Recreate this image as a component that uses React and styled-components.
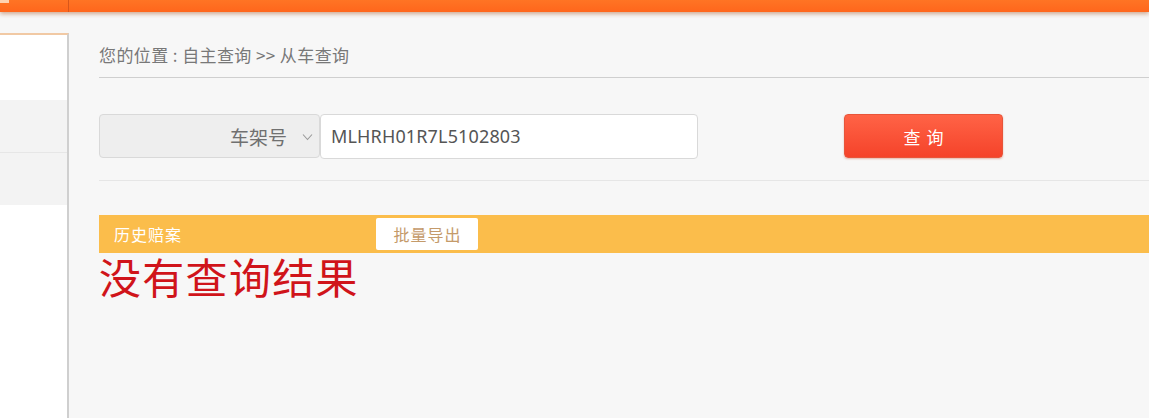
import React from "react";
import styled, { createGlobalStyle } from "styled-components";

const Global = createGlobalStyle`
  html, body { margin: 0; padding: 0; }
  body {
    width: 1149px;
    height: 418px;
    overflow: hidden;
    background: #f7f7f7;
    font-family: "Noto Sans CJK SC", "Noto Sans", "Liberation Sans", sans-serif;
  }
`;

const Page = styled.div`
  display: flex;
  flex-direction: column;
  height: 418px;
`;

const TopBar = styled.header`
  height: 12px;
  flex: none;
  display: flex;
  background: linear-gradient(#ff7424, #ff661c);
  box-shadow: 0 2px 4px rgba(160, 70, 20, 0.45);
  position: relative;
  z-index: 2;
`;

const BrandCell = styled.div`
  width: 68px;
  border-right: 1px solid #d8561a;
  position: relative;
  &::before {
    content: "";
    position: absolute;
    left: 0;
    top: 0;
    width: 9px;
    height: 3px;
    background: #ffd2b0;
  }
`;

const Body = styled.div`
  flex: 1;
  display: flex;
  min-height: 0;
`;

const Sidebar = styled.aside`
  width: 67px;
  flex: none;
  margin-top: 21px;
  background: #fff;
  border-top: 2px solid #f1c9a4;
  border-right: 2px solid #cfcfcf;
  display: flex;
  flex-direction: column;
`;

const SideItem = styled.div`
  height: ${(p) => p.$h}px;
  flex: none;
  background: ${(p) => (p.$shade ? "#f3f3f3" : "#fff")};
  border-bottom: ${(p) => (p.$line ? "1px solid #e6e6e6" : "none")};
`;

const Main = styled.main`
  flex: 1;
  min-width: 0;
  padding: 32px 0 0 30px;
  overflow: hidden;
  background: #f7f7f7;
`;

const Crumb = styled.div`
  font-size: 17px;
  color: #787878;
  line-height: 22px;
  padding-bottom: 11px;
  border-bottom: 1px solid #cfcfcf;
  letter-spacing: 0.4px;
`;

const SearchRow = styled.div`
  display: flex;
  align-items: center;
  height: 46px;
  margin-top: 35px;
  padding-bottom: 21px;
  border-bottom: 1px solid #e6e6e6;
`;

const SelectBox = styled.div`
  width: 221px;
  height: 44px;
  box-sizing: border-box;
  border: 1px solid #d9d9d9;
  border-radius: 4px;
  background: #eeeeee;
  display: flex;
  align-items: center;
  justify-content: flex-end;
  padding-right: 6px;
  gap: 15px;
  font-size: 19px;
  color: #707070;
`;

const Chevron = styled.svg`
  width: 11px;
  height: 8px;
  margin-top: 2px;
`;

const TextInput = styled.div`
  width: 378px;
  height: 45px;
  box-sizing: border-box;
  border: 1px solid #d9d9d9;
  border-radius: 4px;
  background: #fff;
  display: flex;
  align-items: center;
  padding-left: 10px;
  font-family: "Noto Sans", "Liberation Sans", sans-serif;
  font-size: 18px;
  letter-spacing: 0.15px;
  color: #555;
`;

const QueryButton = styled.button`
  margin-left: 146px;
  width: 159px;
  height: 44px;
  border: 1px solid #e8553a;
  border-radius: 4px;
  background: linear-gradient(#ff6346, #f5432a);
  color: #fff;
  font-family: inherit;
  font-size: 17px;
  letter-spacing: 6px;
  padding: 0 0 0 6px;
  box-shadow: 0 1px 2px rgba(200, 60, 30, 0.35);
`;

const ResultBar = styled.div`
  margin-top: 34px;
  height: 38px;
  background: #fbbd4b;
  display: flex;
  align-items: center;
`;

const BarTitle = styled.span`
  width: 262px;
  padding-left: 15px;
  font-size: 16px;
  letter-spacing: 1px;
  color: #fff;
`;

const ExportButton = styled.button`
  width: 102px;
  height: 32px;
  border: none;
  border-radius: 2px;
  background: #fff;
  color: #c49a6a;
  font-family: inherit;
  font-size: 16px;
  letter-spacing: 1px;
  padding: 0 0 0 1px;
`;

const Empty = styled.div`
  margin-top: -2px;
  font-size: 42px;
  line-height: 50px;
  color: #d0141a;
  letter-spacing: 1.3px;
`;

export default function App() {
  return (
    <>
      <Global />
      <Page>
        <TopBar>
          <BrandCell />
        </TopBar>
        <Body>
          <Sidebar>
            <SideItem $h={65} />
            <SideItem $h={52} $shade $line />
            <SideItem $h={52} $shade />
          </Sidebar>
          <Main>
            <Crumb>您的位置 : 自主查询 &gt;&gt; 从车查询</Crumb>
            <SearchRow>
              <SelectBox>
                <span>车架号</span>
                <Chevron viewBox="0 0 11 8">
                  <path d="M1 1.5 L5.5 6.5 L10 1.5" fill="none" stroke="#999" strokeWidth="1.1" />
                </Chevron>
              </SelectBox>
              <TextInput>MLHRH01R7L5102803</TextInput>
              <QueryButton>查询</QueryButton>
            </SearchRow>
            <ResultBar>
              <BarTitle>历史赔案</BarTitle>
              <ExportButton>批量导出</ExportButton>
            </ResultBar>
            <Empty>没有查询结果</Empty>
          </Main>
        </Body>
      </Page>
    </>
  );
}
